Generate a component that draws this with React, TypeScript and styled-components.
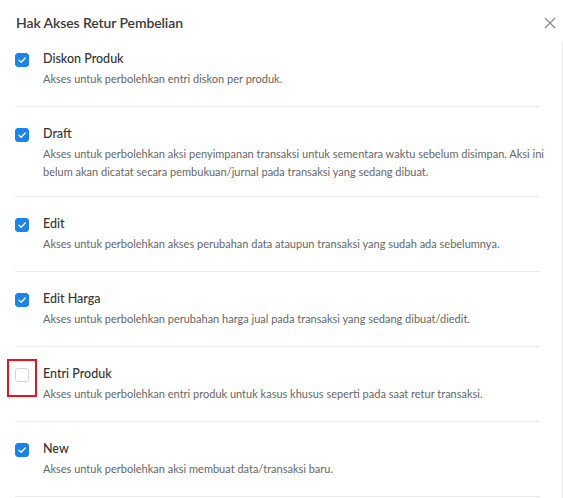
import React from 'react';
import styled, { createGlobalStyle } from 'styled-components';

const GlobalStyle = createGlobalStyle`
  html, body {
    margin: 0;
    padding: 0;
    background: #fff;
  }
  body {
    font-family: Lato, "Noto Sans", sans-serif;
    color: #333;
  }
`;

const Modal = styled.div`
  width: 563px;
  height: 498px;
  overflow: hidden;
  background: #fff;
  display: flex;
  flex-direction: column;
`;

const Header = styled.div`
  display: flex;
  align-items: center;
  justify-content: space-between;
  padding: 14px 4px 0 16px;
  height: 18px;
`;

const Title = styled.h2`
  margin: 0;
  font-size: 14px;
  line-height: 18px;
  font-weight: 600;
  color: #3a3a3a;
  letter-spacing: -0.1px;
`;

const CloseButton = styled.button`
  border: 0;
  background: none;
  padding: 0;
  width: 18px;
  height: 18px;
  display: flex;
  align-items: center;
  justify-content: center;
  cursor: pointer;
`;

const Body = styled.div`
  display: flex;
  flex: 1;
  min-height: 0;
`;

const List = styled.div`
  flex: 1;
  padding: 0 16px 0 15px;
`;

const Track = styled.div`
  width: 1px;
  margin-top: 11px;
  background: #ececec;
`;

const Item = styled.div`
  position: relative;
  display: flex;
  gap: 14px;
  padding: 17px 0 16px;

  &::after {
    content: '';
    position: absolute;
    left: 0;
    right: 6px;
    bottom: 0;
    height: 1px;
    background: #ececec;
  }
`;

const BoxWrap = styled.div`
  position: relative;
  flex: none;
  margin-top: 4px;
  width: 14px;
  height: 14px;
`;

const Box = styled.div<{ $checked: boolean }>`
  box-sizing: border-box;
  width: 14px;
  height: 14px;
  border-radius: 3px;
  background: ${p => (p.$checked ? '#1c84e6' : '#fff')};
  border: 1px solid ${p => (p.$checked ? '#1c84e6' : '#d4d4d4')};
  display: flex;
  align-items: center;
  justify-content: center;
`;

const Highlight = styled.div`
  position: absolute;
  left: -8px;
  top: -9px;
  width: 30px;
  height: 38px;
  box-sizing: border-box;
  border: 2px solid #e8141c;
  pointer-events: none;
`;

const Texts = styled.div`
  display: flex;
  flex-direction: column;
  min-width: 0;
  min-height: 42px;
`;

const Label = styled.div`
  font-size: 12.5px;
  line-height: 20px;
  font-weight: 500;
  color: #333;
`;

const Desc = styled.div`
  margin-top: 1px;
  font-size: 11px;
  line-height: 18px;
  color: #666;
`;

const items = [
  {
    label: 'Diskon Produk',
    desc: 'Akses untuk perbolehkan entri diskon per produk.',
    checked: true,
  },
  {
    label: 'Draft',
    desc: 'Akses untuk perbolehkan aksi penyimpanan transaksi untuk sementara waktu sebelum disimpan. Aksi ini belum akan dicatat secara pembukuan/jurnal pada transaksi yang sedang dibuat.',
    checked: true,
  },
  {
    label: 'Edit',
    desc: 'Akses untuk perbolehkan akses perubahan data ataupun transaksi yang sudah ada sebelumnya.',
    checked: true,
  },
  {
    label: 'Edit Harga',
    desc: 'Akses untuk perbolehkan perubahan harga jual pada transaksi yang sedang dibuat/diedit.',
    checked: true,
  },
  {
    label: 'Entri Produk',
    desc: 'Akses untuk perbolehkan entri produk untuk kasus khusus seperti pada saat retur transaksi.',
    checked: false,
    highlight: true,
  },
  {
    label: 'New',
    desc: 'Akses untuk perbolehkan aksi membuat data/transaksi baru.',
    checked: true,
  },
];

function Check() {
  return (
    <svg width="10" height="10" viewBox="0 0 10 10" fill="none">
      <path d="M2 5.2 L4.2 7.3 L8.2 3" stroke="#fff" strokeWidth="1.3" strokeLinecap="round" strokeLinejoin="round" />
    </svg>
  );
}

export default function App() {
  return (
    <>
      <GlobalStyle />
      <Modal>
        <Header>
          <Title>Hak Akses Retur Pembelian</Title>
          <CloseButton aria-label="Tutup">
            <svg width="12" height="12" viewBox="0 0 12 12">
              <path d="M1 1 L11 11 M11 1 L1 11" stroke="#8a8a8a" strokeWidth="1.3" />
            </svg>
          </CloseButton>
        </Header>
        <Body>
          <List>
            {items.map(it => (
              <Item key={it.label}>
                <BoxWrap>
                  <Box $checked={it.checked}>{it.checked && <Check />}</Box>
                  {it.highlight && <Highlight />}
                </BoxWrap>
                <Texts>
                  <Label>{it.label}</Label>
                  <Desc>{it.desc}</Desc>
                </Texts>
              </Item>
            ))}
          </List>
          <Track />
        </Body>
      </Modal>
    </>
  );
}
